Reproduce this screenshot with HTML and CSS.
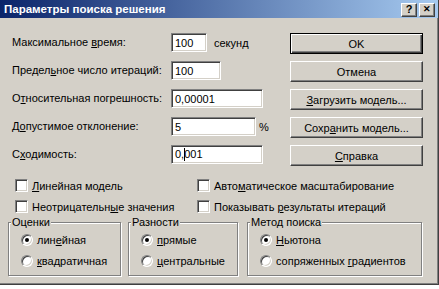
FILE: index.html
```html
<!DOCTYPE html>
<html lang="ru">
<head>
<meta charset="utf-8">
<title>Параметры поиска решения</title>
<link rel="stylesheet" href="styles.css">
</head>
<body>
<div class="window">
  <div class="titlebar">
    <span class="title">Параметры поиска решения</span>
    <div class="tbtns">
      <span class="tbtn">?</span>
      <span class="tbtn close">&#x2715;</span>
    </div>
  </div>

  <div class="form">
    <div class="lbl">Максимальное <u>в</u>ремя:</div>
    <div class="fld"><span class="input w35">100</span><span class="unit">секунд</span></div>
    <div class="bcell"><span class="btn default">OK</span></div>

    <div class="lbl">Предел<u>ь</u>ное число итераций:</div>
    <div class="fld"><span class="input w49">100</span></div>
    <div class="bcell"><span class="btn">Отмена</span></div>

    <div class="lbl">О<u>т</u>носительная погрешность:</div>
    <div class="fld"><span class="input w91">0,00001</span></div>
    <div class="bcell"><span class="btn"><span><u>З</u>агрузить модель...</span></span></div>

    <div class="lbl">Д<u>о</u>пустимое отклонение:</div>
    <div class="fld"><span class="input w84">5</span><span class="unit pct">%</span></div>
    <div class="bcell"><span class="btn"><span>Сохр<u>а</u>нить модель...</span></span></div>

    <div class="lbl">С<u>х</u>одимость:</div>
    <div class="fld"><span class="input w91"><span>0,<span class="caret"></span>001</span></span></div>
    <div class="bcell"><span class="btn"><span><u>С</u>правка</span></span></div>
  </div>

  <div class="checks">
    <label class="chk"><span class="box"></span><span><u>Л</u>инейная модель</span></label>
    <label class="chk"><span class="box"></span><span>Авто<u>м</u>атическое масштабирование</span></label>
    <label class="chk"><span class="box"></span><span>Неотрицательн<u>ы</u>е значения</span></label>
    <label class="chk"><span class="box"></span><span>Показывать <u>р</u>езультаты итераций</span></label>
  </div>

  <div class="groups">
    <fieldset class="grp g1">
      <legend>Оценки</legend>
      <div class="opt"><span class="radio on"></span><span>лин<u>е</u>йная</span></div>
      <div class="opt"><span class="radio"></span><span><u>к</u>вадратичная</span></div>
    </fieldset>
    <fieldset class="grp g2">
      <legend>Разности</legend>
      <div class="opt"><span class="radio on"></span><span><u>п</u>рямые</span></div>
      <div class="opt"><span class="radio"></span><span><u>ц</u>ентральные</span></div>
    </fieldset>
    <fieldset class="grp g3">
      <legend>Метод поиска</legend>
      <div class="opt"><span class="radio on"></span><span><u>Н</u>ьютона</span></div>
      <div class="opt"><span class="radio"></span><span>сопряженных <u>г</u>радиентов</span></div>
    </fieldset>
  </div>
</div>
</body>
</html>
```

FILE: styles.css
```css
* { box-sizing: border-box; }
html, body { margin: 0; padding: 0; background: #fff; }
body {
  width: 439px;
  height: 289px;
  overflow: hidden;
  font-family: "Liberation Sans", Arial, sans-serif;
  font-size: 11px;
  color: #000;
}
u { text-decoration: underline; text-underline-offset: 1px; }

.window {
  width: 439px;
  height: 285px;
  background: #d4d0c8;
  border-right: 1px solid #404040;
  border-bottom: 1px solid #404040;
  box-shadow: inset -1px -1px 0 #808080;
  display: flex;
  flex-direction: column;
}

.titlebar {
  height: 18px;
  flex: none;
  background: linear-gradient(to right, #0a246a, #a6caf0);
  display: flex;
  align-items: center;
  justify-content: space-between;
  padding: 0 3px 0 4px;
}
.title {
  color: #fff;
  font-weight: bold;
  font-size: 11.5px;
}
.tbtns { display: flex; gap: 2px; padding-top: 1px; }
.tbtn {
  width: 16px;
  height: 14px;
  background: #d4d0c8;
  border: 1px solid;
  border-color: #fff #404040 #404040 #fff;
  box-shadow: inset -1px -1px 0 #808080;
  display: flex;
  align-items: center;
  justify-content: center;
  font-weight: bold;
  font-size: 11px;
  line-height: 1;
  color: #000;
}
.tbtn.close { font-size: 9px; }

.form {
  margin-top: 15px;
  padding: 0 13px 0 12px;
  display: grid;
  grid-template-columns: 159px 119px 134px;
  grid-auto-rows: 28px;
}
.lbl { height: 19px; line-height: 19px; white-space: nowrap; }
.fld { display: flex; align-items: center; height: 19px; }
.unit { margin-left: 7px; }
.unit.pct { margin-left: 3px; }
.input {
  height: 19px;
  background: #fff;
  border: 1px solid;
  border-color: #808080 #fff #fff #808080;
  box-shadow: inset 1px 1px 0 #404040, inset -1px -1px 0 #d4d0c8;
  padding-left: 3px;
  display: flex;
  align-items: center;
}
.w35 { width: 36px; }
.w49 { width: 50px; }
.w91 { width: 92px; }
.w84 { width: 85px; }
.caret {
  display: inline-block;
  width: 1px;
  height: 13px;
  background: #000;
  margin-right: -1px;
  vertical-align: -3px;
}

.bcell { display: flex; }
.btn {
  width: 133px;
  height: 21px;
  background: #d4d0c8;
  border: 1px solid;
  border-color: #fff #404040 #404040 #fff;
  box-shadow: inset -1px -1px 0 #808080;
  display: flex;
  align-items: center;
  justify-content: center;
  white-space: nowrap;
}
.btn.default {
  border: 1px solid #000;
  box-shadow: inset 1px 1px 0 #fff, inset -1px -1px 0 #404040, inset -2px -2px 0 #808080;
}

.checks {
  margin-top: 2px;
  padding-left: 15px;
  display: grid;
  grid-template-columns: 182px 1fr;
  grid-auto-rows: 21px;
}
.chk { display: flex; align-items: center; white-space: nowrap; }
.box {
  width: 13px;
  height: 13px;
  background: #fff;
  border: 1px solid;
  border-color: #808080 #fff #fff #808080;
  box-shadow: inset 1px 1px 0 #404040, inset -1px -1px 0 #d4d0c8;
  margin-right: 4px;
  flex: none;
}

.groups {
  display: flex;
  padding-left: 8px;
  margin-top: -1px;
}
.grp {
  margin: 0;
  padding: 0 4px 4px 12px;
  border: 1px solid #808080;
  box-shadow: 1px 1px 0 #fff, inset 1px 1px 0 #fff;
  min-width: 0;
}
.grp legend {
  padding: 0 1px;
  margin-left: -10px;
  line-height: 13px;
  background: #d4d0c8;
}
.g1 { width: 113px; }
.g2 { width: 110px; margin-left: 7px; }
.g3 { width: 175px; margin-left: 9px; }
.opt { height: 21px; display: flex; align-items: center; white-space: nowrap; }
.radio {
  width: 12px;
  height: 12px;
  border-radius: 50%;
  background: #fff;
  border: 1px solid;
  border-color: #808080 #fff #fff #808080;
  box-shadow: inset 1px 1px 0 #404040, inset -1px -1px 0 #d4d0c8;
  margin-right: 4px;
  flex: none;
  display: flex;
  align-items: center;
  justify-content: center;
}
.radio.on::after {
  content: "";
  width: 4px;
  height: 4px;
  border-radius: 50%;
  background: #000;
}
```
